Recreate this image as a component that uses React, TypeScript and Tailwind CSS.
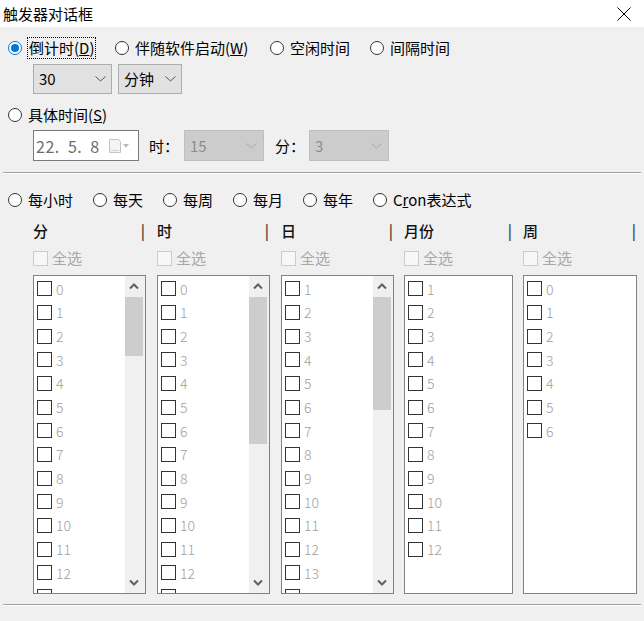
import React from 'react'

const font = { fontFamily: '"Noto Sans CJK SC", "Microsoft YaHei", sans-serif' }

function Radio({ checked = false, width, children }: { checked?: boolean; width: number; children: React.ReactNode }) {
  return (
    <div className="flex h-[22px] items-center" style={{ width }}>
      <span
        className={
          checked
            ? 'flex h-[14px] w-[14px] shrink-0 items-center justify-center rounded-full border border-[#0078d7] bg-white'
            : 'flex h-[14px] w-[14px] shrink-0 items-center justify-center rounded-full border border-[#333333] bg-white'
        }
      >
        {checked && <span className="h-[8px] w-[8px] rounded-full bg-[#0078d7]" />}
      </span>
      <span className="ml-[6px] text-[15px] leading-[20px] whitespace-nowrap text-[#000]">{children}</span>
    </div>
  )
}

function Chevron({ color = '#555555' }: { color?: string }) {
  return (
    <svg width="11" height="6" viewBox="0 0 11 6" className="shrink-0">
      <path d="M0.5 0.5 L5.5 5 L10.5 0.5" fill="none" stroke={color} strokeWidth="1" />
    </svg>
  )
}

function Combo({ value, width, disabled = false }: { value: string; width: number; disabled?: boolean }) {
  return (
    <div
      className={
        disabled
          ? 'flex h-[31px] items-center justify-between border border-[#bfbfbf] bg-[#cccccc] pl-[5px] pr-[6px]'
          : 'flex h-[30px] items-center justify-between border border-[#adadad] bg-[#e1e1e1] pl-[5px] pr-[5px]'
      }
      style={{ width }}
    >
      <span className={disabled ? 'text-[15px] leading-[20px] text-[#8c8c8c]' : 'text-[15px] leading-[20px] text-[#000]'}>
        {value}
      </span>
      <Chevron color={disabled ? '#a6a6a6' : '#555555'} />
    </div>
  )
}

function Check({ light = false }: { light?: boolean }) {
  return (
    <span
      className={
        light
          ? 'block h-[15px] w-[15px] shrink-0 border border-[#cccccc] bg-[#f7f7f7]'
          : 'block h-[15px] w-[15px] shrink-0 border border-[#333333] bg-white'
      }
    />
  )
}

function ScrollUp() {
  return (
    <svg width="10" height="7" viewBox="0 0 10 7">
      <path d="M1 5.5 L5 1.5 L9 5.5" fill="none" stroke="#606060" strokeWidth="2" />
    </svg>
  )
}

function ScrollDown() {
  return (
    <svg width="10" height="7" viewBox="0 0 10 7">
      <path d="M1 1.5 L5 5.5 L9 1.5" fill="none" stroke="#606060" strokeWidth="2" />
    </svg>
  )
}

type Col = { title: string; items: number[]; width: number; gap: number; thumb?: number; more?: boolean }

const range = (a: number, b: number) => Array.from({ length: b - a + 1 }, (_, i) => a + i)

const columns: Col[] = [
  { title: '分', items: range(0, 12), width: 113, gap: 0, thumb: 59, more: true },
  { title: '时', items: range(0, 12), width: 113, gap: 11, thumb: 147, more: true },
  { title: '日', items: range(1, 13), width: 113, gap: 11, thumb: 113, more: true },
  { title: '月份', items: range(1, 12), width: 109, gap: 10 },
  { title: '周', items: range(0, 6), width: 114, gap: 10 },
]

function ListColumn({ col }: { col: Col }) {
  return (
    <div className="flex flex-col" style={{ width: col.width, marginLeft: col.gap }}>
      <div className="flex h-[20px] items-center justify-between pr-[1px]">
        <span className="text-[15px] leading-[20px] font-medium text-[#111]">{col.title}</span>
        <span className="text-[15px] leading-[20px] font-medium text-[#333]">|</span>
      </div>
      <div className="mt-[7px] flex h-[20px] items-center">
        <Check light />
        <span className="ml-[4px] text-[15px] leading-[20px] text-[#a8a8a8]">全选</span>
      </div>
      <div className="mt-[7px] flex h-[319px] overflow-hidden border border-[#828282] bg-white">
        <div className="flex-1 overflow-hidden pt-[1px] pl-[3px]">
          {col.items.map((n) => (
            <div key={n} className="flex h-[23.67px] items-center">
              <Check />
              <span className="ml-[4px] text-[14px] leading-[18px] font-light text-[#a0a0a0]">{n}</span>
            </div>
          ))}
          {col.more && (
            <div className="flex h-[23.67px] items-center">
              <Check />
            </div>
          )}
        </div>
        {col.thumb && (
          <div className="flex w-[20px] shrink-0 flex-col bg-[#f0f0f0]">
            <div className="flex h-[21px] items-center justify-center pr-[2px]">
              <ScrollUp />
            </div>
            <div className="mr-[2px] bg-[#cdcdcd]" style={{ height: col.thumb }} />
            <div className="flex-1" />
            <div className="flex h-[21px] items-center justify-center pr-[2px]">
              <ScrollDown />
            </div>
          </div>
        )}
      </div>
    </div>
  )
}

export default function App() {
  return (
    <div className="h-[621px] w-[644px] overflow-hidden bg-[#f0f0f0]" style={font}>
      <div className="flex h-[27px] items-center justify-between bg-white pl-[3px] pr-[13px]">
        <span className="text-[15px] leading-[20px] text-[#000]">触发器对话框</span>
        <svg width="14" height="14" viewBox="0 0 14 14">
          <path d="M0.5 0.5 L13.5 13.5 M13.5 0.5 L0.5 13.5" stroke="#000" strokeWidth="1" />
        </svg>
      </div>

      <div className="pt-[10px]">
        <div className="flex pl-[8px]">
          <div className="flex h-[22px] w-[107px] items-center">
            <span className="flex h-[14px] w-[14px] shrink-0 items-center justify-center rounded-full border border-[#0078d7] bg-white">
              <span className="h-[8px] w-[8px] rounded-full bg-[#0078d7]" />
            </span>
            <span className="ml-[5px] border border-dotted border-[#000] px-[1px] text-[15px] leading-[20px] whitespace-nowrap text-[#000]">
              倒计时(<span className="underline">D</span>)
            </span>
          </div>
          <Radio width={155}>
            伴随软件启动(<span className="underline">W</span>)
          </Radio>
          <Radio width={100}>空闲时间</Radio>
          <Radio width={100}>间隔时间</Radio>
        </div>

        <div className="mt-[5px] flex gap-[6px] pl-[33px]">
          <Combo value="30" width={79} />
          <Combo value="分钟" width={64} />
        </div>

        <div className="mt-[10px] flex pl-[8px]">
          <Radio width={200}>
            具体时间(<span className="underline">S</span>)
          </Radio>
        </div>

        <div className="mt-[4px] flex items-center pl-[33px]">
          <div className="flex h-[31px] w-[106px] items-center border border-[#7a7a7a] bg-white pl-[2px]">
            <span className="text-[16px] leading-[20px] whitespace-pre tracking-[0.5px] text-[#6d6d6d]">22.  5.  8</span>
            <svg width="24" height="16" viewBox="0 0 24 16" className="ml-auto mr-[6px]">
              <path d="M1.5 1.5 H10.5 L12.5 3.5 V14.5 H1.5 Z" fill="#f4f4f4" stroke="#c4c4c4" strokeWidth="1" />
              <path d="M3 12.5 H11" stroke="#d0d0d0" strokeWidth="1" />
              <path d="M15 6 H21 L18 9.5 Z" fill="#b8b8b8" />
            </svg>
          </div>
          <span className="ml-[10px] w-[35px] text-[15px] leading-[20px] text-[#000]">时：</span>
          <Combo value="15" width={80} disabled />
          <span className="ml-[11px] w-[34px] text-[15px] leading-[20px] text-[#000]">分：</span>
          <Combo value="3" width={80} disabled />
        </div>

        <div className="mx-[3px] mt-[11px] h-[2px] border-t border-b border-t-[#a0a0a0] border-b-white" />

        <div className="mt-[15px] flex pl-[8px]">
          <Radio width={85}>每小时</Radio>
          <Radio width={70}>每天</Radio>
          <Radio width={70}>每周</Radio>
          <Radio width={70}>每月</Radio>
          <Radio width={70}>每年</Radio>
          <Radio width={110}>
            C<span className="underline">r</span>on表达式
          </Radio>
        </div>

        <div className="mt-[10px] flex pl-[33px]">
          {columns.map((col) => (
            <ListColumn key={col.title} col={col} />
          ))}
        </div>

        <div className="mx-[3px] mt-[10px] h-[2px] border-t border-b border-t-[#a0a0a0] border-b-white" />
      </div>
    </div>
  )
}
